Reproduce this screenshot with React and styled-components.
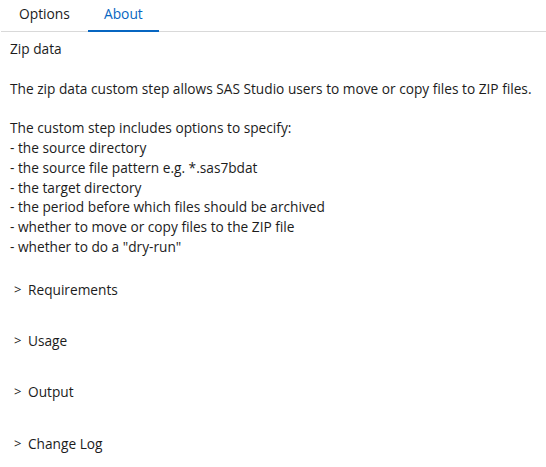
import React, { useState } from "react";
import styled, { createGlobalStyle } from "styled-components";

const GlobalStyle = createGlobalStyle`
  html, body {
    margin: 0;
    padding: 0;
    background: #ffffff;
  }
  body {
    font-family: "Open Sans", Lato, sans-serif;
    color: #1c1c1c;
  }
`;

const Page = styled.div`
  width: 546px;
  min-height: 467px;
  background: #fff;
`;

const TabBar = styled.div`
  display: flex;
  height: 31px;
  margin-left: 1px;
  border-bottom: 1px solid #d9d9d9;
`;

const Tab = styled.button`
  box-sizing: border-box;
  height: 32px;
  padding: 0 ${(p) => p.$pad}px 4px;
  margin: 0;
  border: none;
  border-bottom: 2px solid ${(p) => (p.$active ? "#0766c1" : "transparent")};
  background: none;
  font-family: inherit;
  font-size: 13.8px;
  color: ${(p) => (p.$active ? "#0766c1" : "#1c1c1c")};
  cursor: pointer;
`;

const Content = styled.div`
  padding: 7px 10px 0;
  font-size: 13.7px;
  line-height: 19.7px;
`;

const Title = styled.div`
  margin-bottom: 20px;
`;

const Para = styled.p`
  margin: 0 0 20px;
`;

const List = styled.div`
  margin-bottom: 8px;
`;

const Section = styled.div`
  height: 51.2px;
  display: flex;
  align-items: center;
  gap: 7px;
  padding-left: 4px;
  cursor: pointer;
`;

const Chevron = styled.span`
  font-size: 13px;
  width: 7px;
`;

const items = [
  "the source directory",
  "the source file pattern e.g. *.sas7bdat",
  "the target directory",
  "the period before which files should be archived",
  "whether to move or copy files to the ZIP file",
  'whether to do a "dry-run"',
];

const sections = ["Requirements", "Usage", "Output", "Change Log"];

export default function App() {
  const [tab, setTab] = useState("about");

  return (
    <Page>
      <GlobalStyle />
      <TabBar>
        <Tab $pad={18} $active={tab === "options"} onClick={() => setTab("options")}>
          Options
        </Tab>
        <Tab $pad={16} $active={tab === "about"} onClick={() => setTab("about")}>
          About
        </Tab>
      </TabBar>
      <Content>
        <Title>Zip data</Title>
        <Para>
          The zip data custom step allows SAS Studio users to move or copy files to ZIP files.
        </Para>
        <List>
          The custom step includes options to specify:
          {items.map((item) => (
            <div key={item}>- {item}</div>
          ))}
        </List>
        {sections.map((s) => (
          <Section key={s}>
            <Chevron>&gt;</Chevron>
            {s}
          </Section>
        ))}
      </Content>
    </Page>
  );
}
